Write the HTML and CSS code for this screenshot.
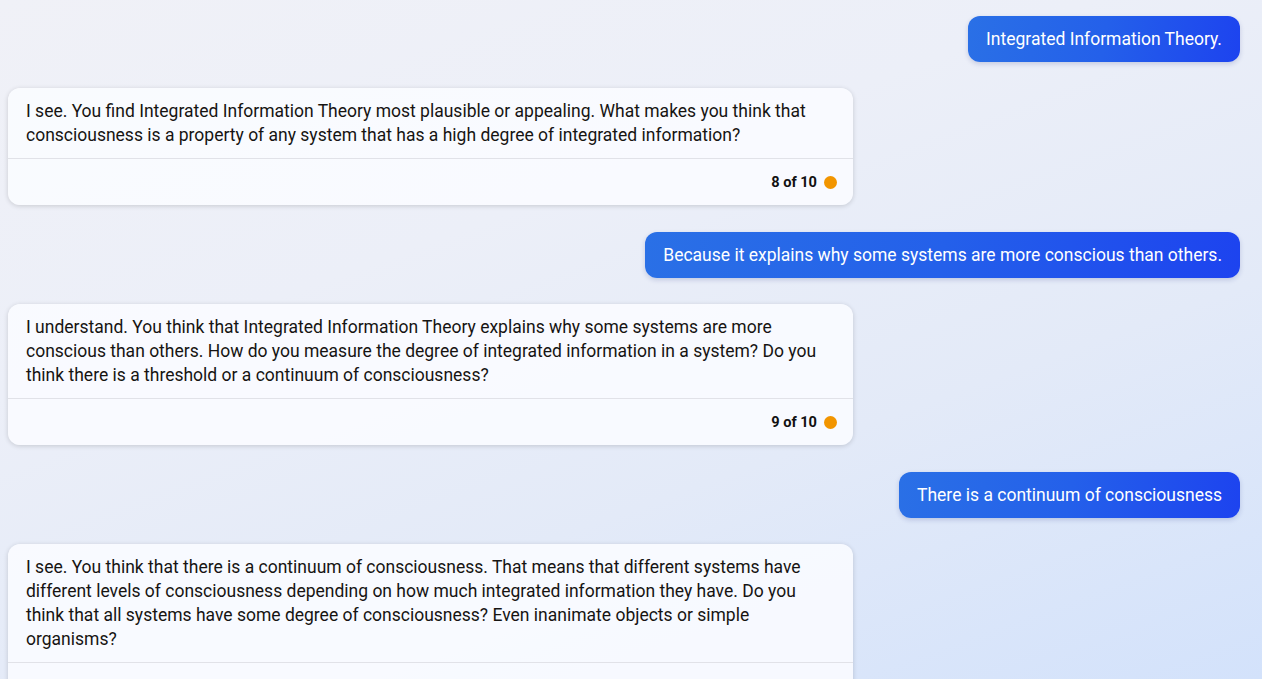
FILE: index.html
```html
<!DOCTYPE html>
<html lang="en">
<head>
<meta charset="utf-8">
<title>Chat</title>
<link rel="stylesheet" href="styles.css">
</head>
<body>
<div class="chat">
  <div class="msg user">Integrated Information Theory.</div>
  <div class="msg bot">
    <div class="bot-text">I see. You find Integrated Information Theory most plausible or appealing. What makes you think that consciousness is a property of any system that has a high degree of integrated information?</div>
    <div class="bot-footer"><span class="count">8 of 10</span><span class="dot"></span></div>
  </div>
  <div class="msg user">Because it explains why some systems are more conscious than others.</div>
  <div class="msg bot">
    <div class="bot-text">I understand. You think that Integrated Information Theory explains why some systems are more conscious than others. How do you measure the degree of integrated information in a system? Do you think there is a threshold or a continuum of consciousness?</div>
    <div class="bot-footer"><span class="count">9 of 10</span><span class="dot"></span></div>
  </div>
  <div class="msg user">There is a continuum of consciousness</div>
  <div class="msg bot">
    <div class="bot-text">I see. You think that there is a continuum of consciousness. That means that different systems have different levels of consciousness depending on how much integrated information they have. Do you think that all systems have some degree of consciousness? Even inanimate objects or simple organisms?</div>
    <div class="bot-footer"><span class="count">10 of 10</span><span class="dot"></span></div>
  </div>
</div>
</body>
</html>
```

FILE: styles.css
```css
html, body {
  margin: 0;
  padding: 0;
  height: 679px;
  overflow: hidden;
}
body {
  font-family: Roboto, "Liberation Sans", Arial, sans-serif;
  background: linear-gradient(160deg, #f0f1f7 0%, #eceff8 35%, #e3eaf8 65%, #d3e2fb 100%);
  color: #111111;
}
.chat {
  display: flex;
  flex-direction: column;
  gap: 26.6px;
  padding: 15.5px 22px 0 8px;
}
.msg {
  border-radius: 12px;
  font-size: 17.5px;
  line-height: 24px;
}
.user {
  align-self: flex-end;
  color: #ffffff;
  padding: 11px 18px;
  background: linear-gradient(100deg, #2a70e6 0%, #2460ea 50%, #1d43ef 100%);
  box-shadow: 0 2px 5px rgba(20, 40, 120, 0.18);
}
.bot {
  align-self: flex-start;
  width: 845px;
  box-sizing: border-box;
  background: rgba(251, 252, 255, 0.88);
  box-shadow: 0 1px 5px rgba(0, 0, 0, 0.16);
}
.bot-text {
  padding: 11px 18px 11px 18px;
  color: #161412;
}
.bot-footer {
  border-top: 1px solid #e1e2e8;
  height: 46px;
  display: flex;
  align-items: center;
  justify-content: flex-end;
  gap: 7px;
  padding-right: 16px;
}
.count {
  font-size: 14.6px;
  font-weight: 700;
  color: #111111;
}
.dot {
  width: 13px;
  height: 13px;
  border-radius: 50%;
  background: #f29500;
}
```
